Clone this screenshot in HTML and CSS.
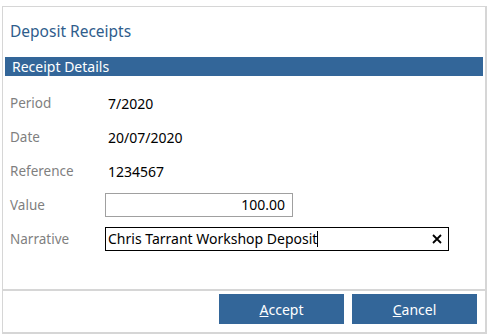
FILE: index.html
```html
<!DOCTYPE html>
<html lang="en">
<head>
    <meta charset="UTF-8">
    <meta name="viewport" content="width=device-width, initial-scale=1.0">
    <title>Deposit Receipts</title>
    <link rel="stylesheet" href="styles.css">
</head>
<body>
    <div class="dialog">
        <div class="dialog-title">Deposit Receipts</div>

        <div class="section-bar">Receipt Details</div>

        <div class="form-grid">
            <div class="label">Period</div>
            <div class="value">7/2020</div>

            <div class="label">Date</div>
            <div class="value">20/07/2020</div>

            <div class="label">Reference</div>
            <div class="value">1234567</div>

            <div class="label">Value</div>
            <div><div class="input-box value-box">100.00</div></div>

            <div class="label">Narrative</div>
            <div>
                <div class="input-box narrative-box">
                    <span class="input-text">Chris Tarrant Workshop Deposit</span><span class="caret"></span>
                    <span class="clear-btn">
                        <svg width="10" height="10" viewBox="0 0 10 10">
                            <path d="M1 1 L9 9 M9 1 L1 9" stroke="#000" stroke-width="1.8" fill="none"/>
                        </svg>
                    </span>
                </div>
            </div>
        </div>

        <div class="dialog-footer">
            <button class="dlg-button"><u>A</u>ccept</button>
            <button class="dlg-button"><u>C</u>ancel</button>
        </div>
    </div>
</body>
</html>
```

FILE: styles.css
```css
body {
    margin: 0;
    padding: 0;
    background-color: #fff;
    font-family: "Noto Sans", "Open Sans", sans-serif;
    font-size: 14px;
    color: #000;
}
.dialog {
    box-sizing: border-box;
    width: 485px;
    height: 328px;
    margin: 6px 0 0 2px;
    border: 1px solid #d6d6d6;
    border-right-width: 2px;
    border-bottom-width: 2px;
    display: flex;
    flex-direction: column;
}
.dialog-title {
    color: #2f5d8c;
    font-size: 15.5px;
    padding: 13px 0 0 7px;
    height: 37px;
}
.section-bar {
    margin: 0 2px;
    height: 19px;
    line-height: 19px;
    background-color: #336699;
    color: #fff;
    padding-left: 7px;
    font-size: 14px;
}
.form-grid {
    display: grid;
    grid-template-columns: 95px 1fr;
    grid-auto-rows: 34px;
    align-items: center;
    margin-top: 10px;
    padding-left: 7px;
}
.label {
    color: #7f7f7f;
    font-size: 13.5px;
}
.value {
    padding-left: 3px;
}
.input-box {
    box-sizing: border-box;
    height: 24px;
    line-height: 22px;
    border: 1px solid #a0a0a0;
    padding: 0 7px 0 2px;
    background-color: #fff;
}
.value-box {
    width: 188px;
    text-align: right;
}
.narrative-box {
    width: 344px;
    border-color: #000;
    padding-right: 6px;
    display: flex;
    align-items: center;
}
.caret {
    display: inline-block;
    width: 1px;
    height: 16px;
    background-color: #000;
}
.clear-btn {
    margin-left: auto;
    display: flex;
    align-items: center;
}
.dialog-footer {
    margin-top: auto;
    border-top: 2px solid #d6d6d6;
    display: flex;
    justify-content: flex-end;
    gap: 8px;
    padding: 3px 8px 8px 0;
}
.dlg-button {
    width: 125px;
    height: 30px;
    border: none;
    background-color: #336699;
    color: #fff;
    font-family: "Noto Sans", "Open Sans", sans-serif;
    font-size: 14px;
    cursor: pointer;
}
.dlg-button:hover {
    background-color: #2b5885;
}
```
